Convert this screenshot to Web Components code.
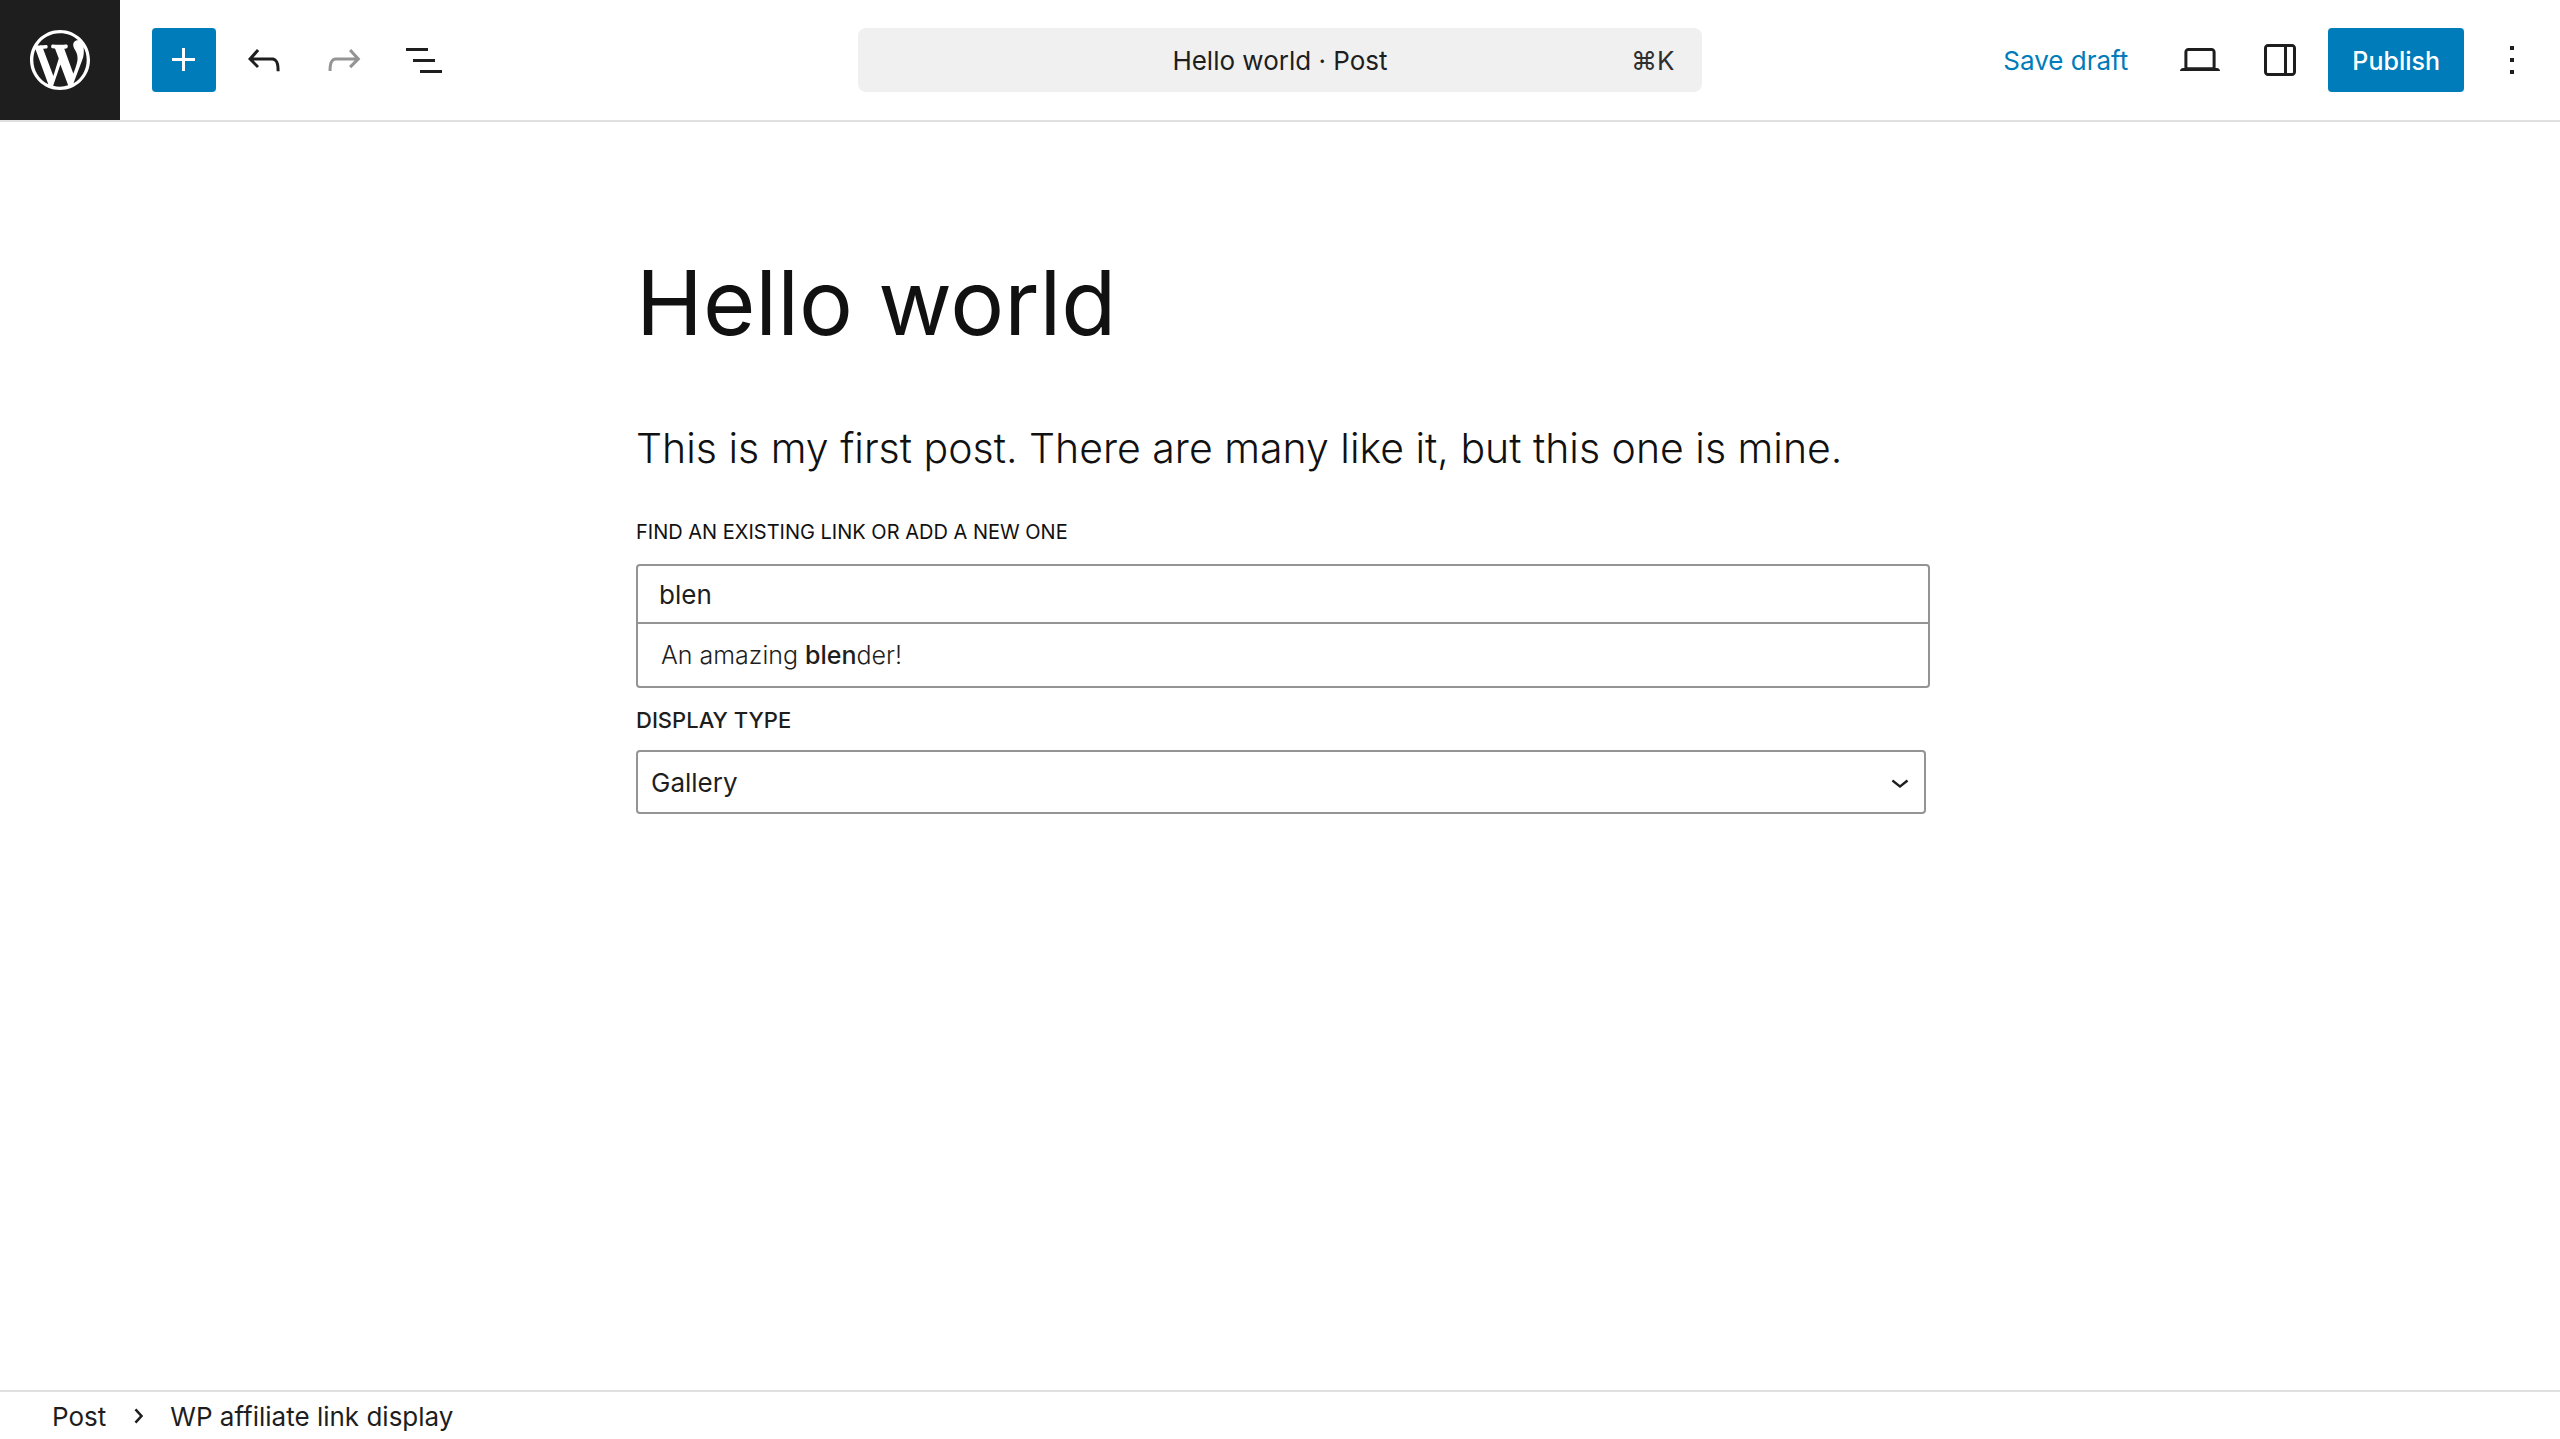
<!DOCTYPE html>
<html lang="en">
<head>
<meta charset="utf-8">
<meta name="viewport" content="width=device-width, initial-scale=1">
<title>Hello world</title>
<style>
    html {
        --accent: #007cba;
        --ink: #1e1e1e;
        --line: #e0e0e0;
        --field-line: #949494;
    }
    body {
        background: #FFF;
        color: #1e1e1e;
        font: 400 26px/32px Inter, "Liberation Sans", sans-serif;
        margin: 0;
    }
</style>
</head>
<body>

<editor-shell>
    <editor-header slot="header">
        <toolbar-button slot="tools" icon="plus" label="Add block" primary></toolbar-button>
        <toolbar-button slot="tools" icon="undo" label="Undo"></toolbar-button>
        <toolbar-button slot="tools" icon="redo" label="Redo" disabled></toolbar-button>
        <toolbar-button slot="tools" icon="list" label="Document overview"></toolbar-button>

        <command-bar slot="command" shortcut="⌘K">Hello world · Post</command-bar>

        <text-button slot="settings">Save draft</text-button>
        <toolbar-button slot="settings" icon="desktop" label="View"></toolbar-button>
        <toolbar-button slot="settings" icon="sidebar" label="Settings"></toolbar-button>
        <text-button slot="settings" primary>Publish</text-button>
        <toolbar-button slot="settings" icon="more" label="Options"></toolbar-button>
    </editor-header>

    <post-content>
        <span slot="title">Hello world</span>
        <span slot="text">This is my first post. There are many like it, but this one is mine.</span>
        <link-finder label="Find an existing link or add a new one" value="blen">An amazing <b>blen</b>der!</link-finder>
        <display-type label="Display type" options="Gallery,List,Single"></display-type>
    </post-content>

    <block-breadcrumb slot="footer" path="Post,WP affiliate link display"></block-breadcrumb>
</editor-shell>

<script>
    const ICONS = {
        plus: 'M11 12.5V17.5H12.5V12.5H17.5V11H12.5V6H11V11H6V12.5H11Z',
        undo: 'M18.3 11.7c-.6-.6-1.4-.9-2.3-.9H6.7l2.9-3.3-1.1-1-4.5 5L8.5 16l1-1-2.7-2.7H16c.5 0 .9.2 1.3.5 1 1 1 3.4 1 4.5v.3h1.5v-.2c0-1.5 0-4.3-1.5-5.7z',
        redo: 'M15.6 6.5l-1.1 1 2.9 3.3H8c-.9 0-1.7.3-2.3.9-1.4 1.5-1.4 4.2-1.4 5.6v.2h1.5v-.3c0-1.1 0-3.5 1-4.5.3-.3.7-.5 1.3-.5h9.2L14.5 15l1.1 1.1 4.6-4.6-4.6-5z',
        list: 'M3 6h11v1.5H3V6Zm3.5 5.5h11V13h-11v-1.5ZM21 17H10v1.5h11V17Z',
        desktop: 'M20.5 16h-.7V8c0-1.1-.9-2-2-2H6.2c-1.1 0-2 .9-2 2v8h-.7c-.8 0-1.5.7-1.5 1.5h20c0-.8-.7-1.5-1.5-1.5zM5.7 8c0-.3.2-.5.5-.5h11.6c.3 0 .5.2.5.5v7.6H5.7V8z',
        sidebar: 'M18 4H6c-1.1 0-2 .9-2 2v12c0 1.1.9 2 2 2h12c1.1 0 2-.9 2-2V6c0-1.1-.9-2-2-2zm-4 14.5H6c-.3 0-.5-.2-.5-.5V6c0-.3.2-.5.5-.5h8v13zm4.5-.5c0 .3-.2.5-.5.5h-2.5v-13H18c.3 0 .5.2.5.5v12z',
        more: 'M13 19h-2v-2h2v2zm0-6h-2v-2h2v2zm0-6h-2V5h2v2z',
        down: 'M17.5 11.6L12 16l-5.5-4.4.9-1.2L12 14l4.5-3.6 1 1.2z',
        right: 'M10.8 6.4L9.4 7.6L13.4 12L9.4 16.4L10.8 17.6L15.9 12Z'
    };

    const LOGO = 'M20 10c0-5.51-4.49-10-10-10C4.48 0 0 4.49 0 10c0 5.52 4.48 10 10 10 5.51 0 10-4.48 10-10zM7.78 15.37L4.37 6.22c.55-.02 1.17-.08 1.17-.08.5-.06.44-1.13-.06-1.11 0 0-1.45.11-2.37.11-.18 0-.37 0-.58-.01C4.12 2.69 6.87 1.11 10 1.11c2.33 0 4.45.87 6.05 2.34-.68-.11-1.65.39-1.65 1.58 0 .74.45 1.36.9 2.1.35.61.55 1.36.55 2.46 0 1.49-1.4 5-1.4 5l-3.03-8.37c.54-.02.82-.17.82-.17.5-.05.44-1.25-.06-1.22 0 0-1.44.12-2.38.12-.87 0-2.33-.12-2.33-.12-.5-.03-.56 1.2-.06 1.22l.92.08 1.26 3.41zM17.41 10c.24-.64.74-1.87.43-4.25.7 1.29 1.05 2.71 1.05 4.25 0 3.29-1.73 6.24-4.4 7.78.97-2.59 1.94-5.2 2.92-7.78zM6.1 18.09C3.12 16.65 1.11 13.53 1.11 10c0-1.3.23-2.48.72-3.59C3.25 10.3 4.67 14.2 6.1 18.09zm4.03-6.63l2.58 6.98c-.86.29-1.76.45-2.71.45-.79 0-1.57-.11-2.29-.33.81-2.38 1.62-4.74 2.42-7.1z';

    function icon(name) {
        return `<svg viewBox="0 0 24 24" fill="currentColor" aria-hidden="true"><path d="${ICONS[name]}"/></svg>`;
    }

    // Attach an open shadow root and fill it from a template
    function render(el, html) {
        const template = document.createElement('template');
        template.innerHTML = html;
        el.attachShadow({mode: 'open'}).appendChild(template.content.cloneNode(true));
    }

    window.customElements.define('editor-shell', class EditorShell extends HTMLElement {
        constructor() {
            super();
            render(this, `
                <style>
                    :host {
                        display: flex;
                        flex-direction: column;
                        min-height: 100vh;
                    }
                    main {
                        flex: 1;
                    }
                </style>
                <slot name="header"></slot>
                <main><slot></slot></main>
                <slot name="footer"></slot>
            `);
        }
    });

    window.customElements.define('editor-header', class EditorHeader extends HTMLElement {
        constructor() {
            super();
            render(this, `
                <style>
                    :host {
                        display: block;
                    }
                    header {
                        align-items: center;
                        border-bottom: 2px solid var(--line);
                        display: grid;
                        grid-template-columns: 1fr 33% 1fr;
                    }
                    .tools,
                    .settings {
                        align-items: center;
                        display: flex;
                        gap: 16px;
                    }
                    .settings {
                        justify-content: flex-end;
                        padding-right: 16px;
                    }
                    .logo {
                        align-items: center;
                        background: var(--ink);
                        color: #FFF;
                        display: flex;
                        height: 120px;
                        justify-content: center;
                        margin-right: 16px;
                        width: 120px;
                    }
                    .logo svg {
                        height: 72px;
                        width: 72px;
                    }
                </style>
                <header>
                    <div class="tools">
                        <a class="logo" href="#" aria-label="View Posts">
                            <svg viewBox="-2 -2 24 24" fill="currentColor" aria-hidden="true"><path d="${LOGO}"/></svg>
                        </a>
                        <slot name="tools"></slot>
                    </div>
                    <slot name="command"></slot>
                    <div class="settings">
                        <slot name="settings"></slot>
                    </div>
                </header>
            `);
        }
    });

    window.customElements.define('toolbar-button', class ToolbarButton extends HTMLElement {
        constructor() {
            super();
            render(this, `
                <style>
                    :host {
                        display: block;
                    }
                    button {
                        align-items: center;
                        background: none;
                        border: 0;
                        border-radius: 4px;
                        color: var(--ink);
                        display: flex;
                        height: 64px;
                        justify-content: center;
                        padding: 0;
                        width: 64px;
                    }
                    button:disabled {
                        color: #949494;
                    }
                    :host([primary]) button {
                        background: var(--accent);
                        color: #FFF;
                    }
                    svg {
                        height: 48px;
                        width: 48px;
                    }
                </style>
                <button type="button">${icon(this.getAttribute('icon'))}</button>
            `);

            const button = this.shadowRoot.querySelector('button');
            button.setAttribute('aria-label', this.getAttribute('label'));
            button.disabled = this.hasAttribute('disabled');
        }
    });

    window.customElements.define('text-button', class TextButton extends HTMLElement {
        constructor() {
            super();
            render(this, `
                <style>
                    :host {
                        display: block;
                    }
                    button {
                        background: none;
                        border: 0;
                        border-radius: 4px;
                        color: var(--accent);
                        font: inherit;
                        height: 64px;
                        padding: 2px 24px 0;
                        white-space: nowrap;
                    }
                    :host([primary]) button {
                        background: var(--accent);
                        color: #FFF;
                        font-size: 25px;
                        font-weight: 500;
                    }
                </style>
                <button type="button"><slot></slot></button>
            `);
        }
    });

    window.customElements.define('command-bar', class CommandBar extends HTMLElement {
        constructor() {
            super();
            render(this, `
                <style>
                    :host {
                        display: block;
                    }
                    button {
                        align-items: center;
                        background: #f0f0f0;
                        border: 0;
                        border-radius: 8px;
                        color: var(--ink);
                        display: grid;
                        font: inherit;
                        grid-template-columns: 1fr auto 1fr;
                        height: 64px;
                        padding: 2px 28px 0;
                        width: 100%;
                    }
                    .title {
                        grid-column: 2;
                    }
                    .shortcut {
                        color: #2f2f2f;
                        text-align: right;
                    }
                </style>
                <button type="button">
                    <span class="title"><slot></slot></span>
                    <span class="shortcut">${this.getAttribute('shortcut')}</span>
                </button>
            `);
        }
    });

    window.customElements.define('post-content', class PostContent extends HTMLElement {
        constructor() {
            super();
            render(this, `
                <style>
                    :host {
                        box-sizing: border-box;
                        display: block;
                        margin: 0 auto;
                        max-width: 1292px;
                        padding: 125px 0 0 2px;
                    }
                    h1,
                    p {
                        color: #111;
                        margin: 0;
                    }
                    h1 {
                        font-size: 90px;
                        font-weight: 400;
                        line-height: 112px;
                    }
                    p {
                        font-size: 41px;
                        font-weight: 300;
                        line-height: 64px;
                        margin: 57px 0 36px;
                    }
                </style>
                <h1><slot name="title"></slot></h1>
                <p><slot name="text"></slot></p>
                <slot></slot>
            `);
        }
    });

    window.customElements.define('link-finder', class LinkFinder extends HTMLElement {
        constructor() {
            super();
            render(this, `
                <style>
                    :host {
                        display: block;
                        margin-right: -4px;
                    }
                    label {
                        color: #111;
                        display: block;
                        font-size: 20px;
                        margin-bottom: 16px;
                        text-transform: uppercase;
                    }
                    .box {
                        border: 2px solid var(--field-line);
                        border-radius: 4px;
                    }
                    input,
                    button {
                        background: none;
                        border: 0;
                        box-sizing: border-box;
                        color: var(--ink);
                        display: block;
                        font: inherit;
                        outline: 0;
                        text-align: left;
                        width: 100%;
                    }
                    input {
                        height: 56px;
                        padding: 0 21px;
                    }
                    ul {
                        border-top: 2px solid var(--field-line);
                        list-style: none;
                        margin: 0;
                        padding: 0;
                    }
                    button {
                        font-size: 25px;
                        font-weight: 300;
                        height: 62px;
                        padding: 0 23px;
                    }
                    ::slotted(b) {
                        font-weight: 500;
                    }
                </style>
                <label for="link">${this.getAttribute('label')}</label>
                <div class="box">
                    <input id="link" type="text" autocomplete="off" value="${this.getAttribute('value')}">
                    <ul>
                        <li><button type="button"><slot></slot></button></li>
                    </ul>
                </div>
            `);
        }
    });

    window.customElements.define('display-type', class DisplayType extends HTMLElement {
        constructor() {
            super();

            const options = this.getAttribute('options').split(',');

            render(this, `
                <style>
                    :host {
                        display: block;
                        margin-top: 16px;
                    }
                    label {
                        display: block;
                        font-size: 22px;
                        font-weight: 500;
                        margin-bottom: 14px;
                        text-transform: uppercase;
                    }
                    .field {
                        align-items: center;
                        display: grid;
                    }
                    select,
                    svg {
                        grid-area: 1 / 1;
                    }
                    select {
                        appearance: none;
                        background: #FFF;
                        border: 2px solid var(--field-line);
                        border-radius: 4px;
                        color: var(--ink);
                        font: inherit;
                        height: 64px;
                        padding: 2px 52px 0 13px;
                        width: 100%;
                    }
                    svg {
                        height: 36px;
                        justify-self: end;
                        margin-right: 8px;
                        pointer-events: none;
                        width: 36px;
                    }
                </style>
                <label for="type">${this.getAttribute('label')}</label>
                <div class="field">
                    <select id="type">${options.map(o => `<option>${o}</option>`).join('')}</select>
                    ${icon('down')}
                </div>
            `);
        }
    });

    window.customElements.define('block-breadcrumb', class BlockBreadcrumb extends HTMLElement {
        constructor() {
            super();

            const path = this.getAttribute('path').split(',');

            render(this, `
                <style>
                    :host {
                        border-top: 2px solid var(--line);
                        display: block;
                    }
                    ul {
                        align-items: center;
                        display: flex;
                        height: 47px;
                        list-style: none;
                        margin: 0;
                        padding: 0 36px;
                    }
                    li {
                        align-items: center;
                        display: flex;
                    }
                    button {
                        background: none;
                        border: 0;
                        color: var(--ink);
                        font: inherit;
                        padding: 2px 16px 0;
                    }
                    svg {
                        height: 32px;
                        width: 32px;
                    }
                </style>
                <nav aria-label="Block breadcrumb">
                    <ul>${path.map((p, i) => `<li>${i ? icon('right') : ''}<button type="button">${p}</button></li>`).join('')}</ul>
                </nav>
            `);
        }
    });
</script>
</body>
</html>
